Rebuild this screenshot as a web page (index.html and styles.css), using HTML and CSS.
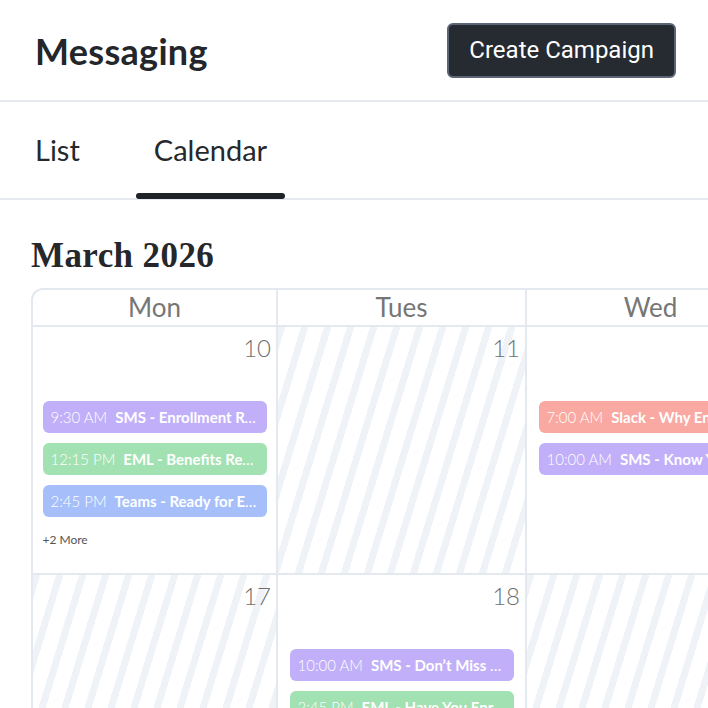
FILE: index.html
```html
<!DOCTYPE html>
<html lang="en">
<head>
<meta charset="utf-8">
<title>Messaging</title>
<link rel="stylesheet" href="styles.css">
</head>
<body>
<header class="topbar">
  <h1 class="title">Messaging</h1>
  <button class="btn-create">Create Campaign</button>
</header>
<nav class="tabs">
  <a class="tab">List</a>
  <a class="tab active">Calendar</a>
</nav>
<main class="content">
  <h2 class="month">March 2026</h2>
  <div class="cal-wrap">
    <div class="calendar">
      <div class="dow">Mon</div>
      <div class="dow">Tues</div>
      <div class="dow">Wed</div>
      <div class="dow">Thurs</div>

      <div class="day">
        <div class="num">10</div>
        <div class="events">
          <div class="event purple"><span class="time">9:30 AM</span><b>SMS - Enrollment Reminder</b></div>
          <div class="event green"><span class="time">12:15 PM</span><b>EML - Benefits Review</b></div>
          <div class="event blue"><span class="time">2:45 PM</span><b>Teams - Ready for Enrollment</b></div>
        </div>
        <div class="more">+2 More</div>
      </div>
      <div class="day off">
        <div class="num">11</div>
      </div>
      <div class="day">
        <div class="num">12</div>
        <div class="events">
          <div class="event salmon"><span class="time">7:00 AM</span><b>Slack - Why Enroll Early</b></div>
          <div class="event purple"><span class="time">10:00 AM</span><b>SMS - Know Your Options</b></div>
        </div>
      </div>
      <div class="day off">
        <div class="num">13</div>
      </div>

      <div class="day off">
        <div class="num">17</div>
      </div>
      <div class="day">
        <div class="num">18</div>
        <div class="events">
          <div class="event purple"><span class="time">10:00 AM</span><b>SMS - Don’t Miss Out</b></div>
          <div class="event green"><span class="time">2:45 PM</span><b>EML - Have You Enrolled?</b></div>
        </div>
      </div>
      <div class="day off">
        <div class="num">19</div>
      </div>
      <div class="day off">
        <div class="num">20</div>
      </div>
    </div>
  </div>
</main>
</body>
</html>
```
FILE: styles.css
```css
* { box-sizing: border-box; }
html, body { margin: 0; padding: 0; }
body {
  width: 708px;
  height: 708px;
  overflow: hidden;
  background: #fff;
  color: #24272c;
  font-family: Lato, "Noto Sans", sans-serif;
}

.topbar {
  height: 102px;
  display: flex;
  align-items: center;
  justify-content: space-between;
  padding: 0 32px 0 35px;
  border-bottom: 2px solid #e6eaf0;
}
.title {
  margin: 2px 0 0;
  font-size: 36px;
  font-weight: 700;
  letter-spacing: 0.3px;
  color: #23262b;
}
.btn-create {
  font-family: Roboto, "Liberation Sans", sans-serif;
  font-size: 24px;
  color: #fff;
  background: #262a31;
  border: 2px solid #5b6573;
  border-radius: 6px;
  height: 55px;
  padding: 0 20px;
}

.tabs {
  display: flex;
  height: 98px;
  padding-left: 17px;
  gap: 38px;
  border-bottom: 2px solid #e6eaf0;
}
.tab {
  position: relative;
  display: flex;
  align-items: center;
  padding: 0 18px 2px;
  font-size: 29px;
  color: #25282d;
}
.tab.active::after {
  content: "";
  position: absolute;
  left: 0;
  right: 0;
  bottom: -1px;
  height: 6px;
  border-radius: 4px;
  background: #1f2226;
}

.content { padding-top: 36px; }
.month {
  margin: 0 0 12px 31px;
  font-family: "Liberation Serif", serif;
  font-size: 35px;
  line-height: 40px;
  font-weight: 700;
  letter-spacing: 0.4px;
  color: #25272b;
}

.cal-wrap {
  padding-left: 31px;
  overflow: hidden;
}
.calendar {
  display: grid;
  grid-template-columns: 245px 249px 249px 249px;
  grid-template-rows: 37px 248px 248px;
  width: max-content;
  border-left: 2px solid #e4e9f0;
  border-top: 2px solid #e4e9f0;
  border-top-left-radius: 12px;
}
.dow {
  display: flex;
  align-items: center;
  justify-content: center;
  border-right: 2px solid #e4e9f0;
  border-bottom: 2px solid #e4e9f0;
  font-size: 26px;
  font-weight: 400;
  color: #767676;
  padding-bottom: 2px;
}
.day {
  display: flex;
  flex-direction: column;
  align-items: center;
  border-right: 2px solid #e4e9f0;
  border-bottom: 2px solid #e4e9f0;
  padding: 6px 0 0;
  background: #fff;
}
.day.off {
  background: repeating-linear-gradient(107deg, #eff2f6 0 7px, #ffffff 7px 22px);
}
.num {
  align-self: stretch;
  text-align: right;
  font-size: 24px;
  font-weight: 300;
  line-height: 30px;
  color: #6f6f6f;
  padding-right: 5px;
}
.events {
  margin-top: 38px;
  display: flex;
  flex-direction: column;
  gap: 10px;
}
.event {
  height: 32px;
  line-height: 32px;
  border-radius: 6px;
  padding: 0 8px;
  color: #fff;
  font-size: 15px;
  white-space: nowrap;
  overflow: hidden;
  text-overflow: ellipsis;
  width: 224px;
}
.event .time { font-weight: 300; margin-right: 8px; }
.event b { font-weight: 700; }
.purple { background: #c1b0f9; }
.green { background: #a2e1b2; }
.blue { background: #a6bffa; }
.salmon { background: #f9a9a1; }
.more {
  width: 224px;
  margin-top: 15px;
  font-size: 12px;
  line-height: 16px;
  color: #555;
}
```
